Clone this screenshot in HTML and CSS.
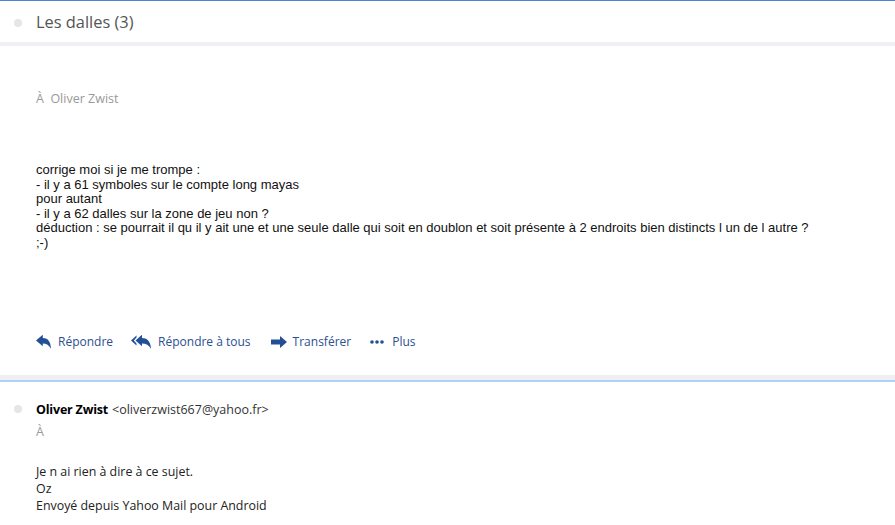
FILE: index.html
```html
<!DOCTYPE html>
<html lang="fr">
<head>
<meta charset="utf-8">
<title>Les dalles (3)</title>
<link rel="stylesheet" href="styles.css">
</head>
<body>
<div class="page">
  <header class="thread-head">
    <span class="dot"></span>
    <h1 class="subject">Les dalles (3)</h1>
  </header>
  <div class="band"></div>
  <section class="msg msg-open">
    <div class="to">À&nbsp; Oliver Zwist</div>
    <div class="body-arial">corrige moi si je me trompe :<br>- il y a 61 symboles sur le compte long mayas<br>pour autant<br>- il y a 62 dalles sur la zone de jeu non ?<br>déduction : se pourrait il qu il y ait une et une seule dalle qui soit en doublon et soit présente à 2 endroits bien distincts l un de l autre ?<br>;-)</div>
    <div class="actions">
      <a class="act act-reply">
        <svg class="ic" width="15" height="14" viewBox="0 0 15 14"><path d="M0 5.5 L6.8 -0.3 L6.8 3 C11.5 3 14.6 6 15 13.8 C13 10 10.5 8.4 6.8 8.4 L6.8 11.3 Z" fill="#234f96"/></svg>
        <span>Répondre</span>
      </a>
      <a class="act act-all">
        <svg class="ic" width="20" height="14" viewBox="0 0 20 14"><path d="M0 5.5 L5.5 0.5 L5.5 2.6 L2.8 5.5 L5.5 8.4 L5.5 10.5 Z" fill="#234f96"/><path d="M4.5 5.5 L11 -0.3 L11 3 C15.8 3 19.6 6 20 13.8 C18 10 15 8.4 11 8.4 L11 11.3 Z" fill="#234f96"/></svg>
        <span>Répondre à tous</span>
      </a>
      <a class="act act-fwd">
        <svg class="ic" width="16" height="12" viewBox="0 0 16 12"><path d="M0 3.5 L9 3.5 L9 0 L16 6 L9 12 L9 8.5 L0 8.5 Z" fill="#234f96"/></svg>
        <span>Transférer</span>
      </a>
      <a class="act act-more">
        <svg class="ic" width="14" height="4" viewBox="0 0 14 4"><circle cx="2" cy="2" r="1.8" fill="#234f96"/><circle cx="7" cy="2" r="1.8" fill="#234f96"/><circle cx="12" cy="2" r="1.8" fill="#234f96"/></svg>
        <span>Plus</span>
      </a>
    </div>
  </section>
  <div class="band band-sel"></div>
  <section class="msg msg-second">
    <div class="from-row">
      <span class="dot"></span>
      <span class="from-name">Oliver Zwist</span>
      <span class="from-mail">&lt;oliverzwist667@yahoo.fr&gt;</span>
    </div>
    <div class="to to-empty">À</div>
    <div class="body-ui">Je n ai rien à dire à ce sujet.<br>Oz<br>Envoyé depuis Yahoo Mail pour Android</div>
  </section>
</div>
</body>
</html>
```
FILE: styles.css
```css
html, body {
  margin: 0;
  padding: 0;
  background: #fff;
}
body {
  font-family: "Open Sans", "Noto Sans", sans-serif;
  width: 895px;
  height: 525px;
  overflow: hidden;
}
.page {
  border-top: 1px solid #4a84d6;
}
.thread-head {
  display: flex;
  align-items: center;
  height: 41px;
  position: relative;
}
.dot {
  position: absolute;
  left: 14px;
  width: 8px;
  height: 8px;
  border-radius: 50%;
  background: #e6e6e8;
}
.thread-head .dot {
  top: 18px;
}
.subject {
  margin: 0 0 0 36px;
  font-weight: normal;
  font-size: 16.4px;
  color: #555;
}
.band {
  height: 4px;
  background: #efeff4;
}
.band-sel {
  height: 5px;
  border-bottom: 2px solid #b2d0f6;
}
.msg {
  padding-left: 36px;
}
.msg-open {
  padding-top: 44px;
  padding-bottom: 23px;
  display: flex;
  flex-direction: column;
}
.to {
  font-size: 12.5px;
  color: #999;
  height: 17px;
  line-height: 17px;
}
.body-arial {
  margin-top: 56px;
  font-family: "Liberation Sans", Arial, sans-serif;
  font-size: 13px;
  line-height: 14.6px;
  color: #111;
}
.actions {
  display: flex;
  align-items: center;
  margin-top: 81px;
  height: 20px;
}
.act {
  display: flex;
  align-items: center;
  font-size: 12px;
  color: #2b4f8f;
  margin-right: 19px;
}
.act .ic {
  margin-right: 7px;
}
.act-reply {
  margin-right: 18px;
}
.act-all {
  margin-right: 20px;
}
.act-fwd {
  margin-right: 19px;
}
.act-fwd .ic {
  margin-right: 6px;
}
.act-more .ic {
  margin-right: 8px;
}
.msg-second {
  padding-top: 19px;
}
.from-row {
  position: relative;
  display: flex;
  align-items: baseline;
  height: 17px;
  line-height: 17px;
  font-size: 12.5px;
}
.from-row .dot {
  top: 4px;
  left: -22px;
}
.from-name {
  font-weight: bold;
  color: #000;
  margin-right: 4px;
  letter-spacing: -0.2px;
}
.from-mail {
  color: #333;
}
.to-empty {
  margin-top: 5px;
}
.body-ui {
  margin-top: 23px;
  font-size: 12.4px;
  line-height: 17px;
  color: #222;
}
```
